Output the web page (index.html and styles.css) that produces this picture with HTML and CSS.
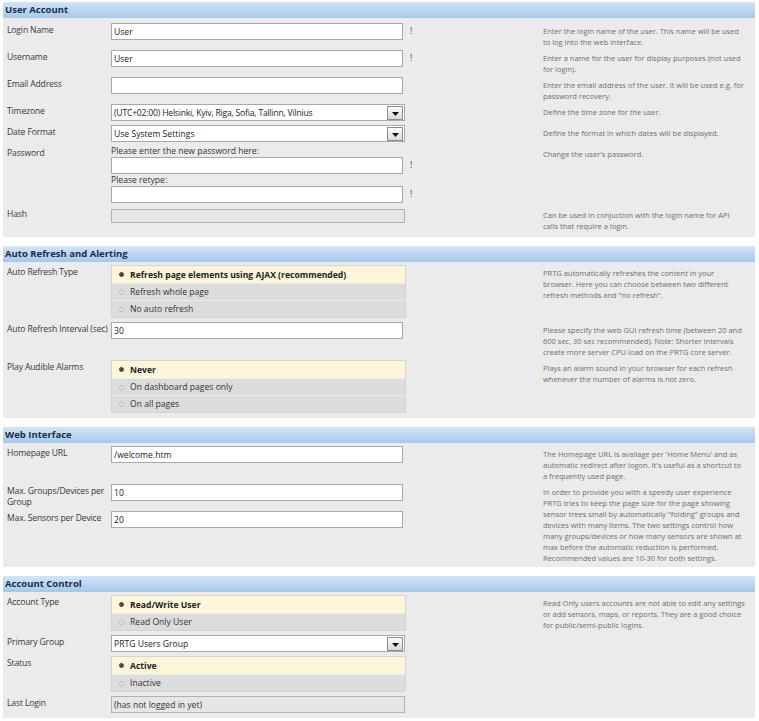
FILE: index.html
```html
<!DOCTYPE html>
<html>
<head>
<meta charset="utf-8">
<link rel="stylesheet" href="styles.css">
</head>
<body>
<div class="page">

  <section class="panel">
    <h2 class="panel-head">User Account</h2>
    <div class="panel-body lead">
      <div class="row">
        <div class="main">
          <div class="line">
            <div class="lbl">Login Name</div>
            <div class="ctrl"><div class="pair"><div class="box"><input class="txt" value="User"></div><span class="mark">!</span></div></div>
          </div>
        </div>
        <p class="help">Enter the login name of the user. This name will be used<br>to log into the web interface.</p>
      </div>
      <div class="row">
        <div class="main">
          <div class="line">
            <div class="lbl">Username</div>
            <div class="ctrl"><div class="pair"><div class="box"><input class="txt" value="User"></div><span class="mark">!</span></div></div>
          </div>
        </div>
        <p class="help">Enter a name for the user for display purposes (not used<br>for login).</p>
      </div>
      <div class="row">
        <div class="main">
          <div class="line">
            <div class="lbl">Email Address</div>
            <div class="ctrl"><div class="pair"><div class="box"><input class="txt" value=""></div></div></div>
          </div>
        </div>
        <p class="help">Enter the email address of the user. It will be used e.g. for<br>password recovery.</p>
      </div>
      <div class="row">
        <div class="main">
          <div class="line">
            <div class="lbl">Timezone</div>
            <div class="ctrl"><div class="pair"><div class="box">
              <div class="sel"><span class="sel-text tight">(UTC+02:00) Helsinki, Kyiv, Riga, Sofia, Tallinn, Vilnius</span><span class="sel-btn"><svg width="7" height="4" viewBox="0 0 7 4"><path d="M0 0H7L3.5 4Z" fill="#111"/></svg></span></div>
            </div></div></div>
          </div>
        </div>
        <p class="help">Define the time zone for the user.</p>
      </div>
      <div class="row">
        <div class="main">
          <div class="line">
            <div class="lbl">Date Format</div>
            <div class="ctrl"><div class="pair"><div class="box">
              <div class="sel"><span class="sel-text">Use System Settings</span><span class="sel-btn"><svg width="7" height="4" viewBox="0 0 7 4"><path d="M0 0H7L3.5 4Z" fill="#111"/></svg></span></div>
            </div></div></div>
          </div>
        </div>
        <p class="help">Define the format in which dates will be displayed.</p>
      </div>
      <div class="row">
        <div class="main">
          <div class="line">
            <div class="lbl">Password</div>
            <div class="ctrl">
              <div class="caption">Please enter the new password here:</div>
              <div class="pair"><div class="box"><input class="txt" type="password" value=""></div><span class="mark">!</span></div>
              <div class="caption next">Please retype:</div>
              <div class="pair"><div class="box"><input class="txt" type="password" value=""></div><span class="mark">!</span></div>
            </div>
          </div>
        </div>
        <p class="help">Change the user's password.</p>
      </div>
      <div class="row">
        <div class="main">
          <div class="line">
            <div class="lbl">Hash</div>
            <div class="ctrl"><div class="pair"><div class="box"><input class="txt ro short" value="" readonly></div></div></div>
          </div>
        </div>
        <p class="help">Can be used in conjuction with the login name for API<br>calls that require a login.</p>
      </div>
    </div>
  </section>

  <section class="panel">
    <h2 class="panel-head">Auto Refresh and Alerting</h2>
    <div class="panel-body">
      <div class="row">
        <div class="main">
          <div class="line">
            <div class="lbl">Auto Refresh Type</div>
            <div class="ctrl">
              <div class="radios">
                <div class="opt on"><span class="dot"></span>Refresh page elements using AJAX (recommended)</div>
                <div class="opt"><span class="dot"></span>Refresh whole page</div>
                <div class="opt"><span class="dot"></span>No auto refresh</div>
              </div>
            </div>
          </div>
        </div>
        <p class="help">PRTG automatically refreshes the content in your<br>browser. Here you can choose between two different<br>refresh methods and "no refresh".</p>
      </div>
      <div class="row">
        <div class="main">
          <div class="line">
            <div class="lbl">Auto Refresh Interval (sec)</div>
            <div class="ctrl"><div class="pair"><div class="box"><input class="txt" value="30"></div></div></div>
          </div>
        </div>
        <p class="help">Please specify the web GUI refresh time (between 20 and<br>600 sec, 30 sec recommended). Note: Shorter intervals<br>create more server CPU load on the PRTG core server.</p>
      </div>
      <div class="row">
        <div class="main">
          <div class="line">
            <div class="lbl">Play Audible Alarms</div>
            <div class="ctrl">
              <div class="radios">
                <div class="opt on"><span class="dot"></span>Never</div>
                <div class="opt"><span class="dot"></span>On dashboard pages only</div>
                <div class="opt"><span class="dot"></span>On all pages</div>
              </div>
            </div>
          </div>
        </div>
        <p class="help">Plays an alarm sound in your browser for each refresh<br>whenever the number of alarms is not zero.</p>
      </div>
    </div>
  </section>

  <section class="panel">
    <h2 class="panel-head">Web Interface</h2>
    <div class="panel-body">
      <div class="row">
        <div class="main">
          <div class="line">
            <div class="lbl">Homepage URL</div>
            <div class="ctrl"><div class="pair"><div class="box"><input class="txt" value="/welcome.htm"></div></div></div>
          </div>
        </div>
        <p class="help">The Homepage URL is availage per 'Home Menu' and as<br>automatic redirect after logon. It's useful as a shortcut to<br>a frequently used page.</p>
      </div>
      <div class="row">
        <div class="main">
          <div class="line">
            <div class="lbl">Max. Groups/Devices per<br>Group</div>
            <div class="ctrl"><div class="pair"><div class="box"><input class="txt" value="10"></div></div></div>
          </div>
          <div class="line">
            <div class="lbl">Max. Sensors per Device</div>
            <div class="ctrl"><div class="pair"><div class="box"><input class="txt" value="20"></div></div></div>
          </div>
        </div>
        <p class="help">In order to provide you with a speedy user experience<br>PRTG tries to keep the page size for the page showing<br>sensor trees small by automatically "folding" groups and<br>devices with many items. The two settings control how<br>many groups/devices or how many sensors are shown at<br>max before the automatic reduction is performed.<br>Recommended values are 10-30 for both settings.</p>
      </div>
    </div>
  </section>

  <section class="panel">
    <h2 class="panel-head">Account Control</h2>
    <div class="panel-body">
      <div class="row">
        <div class="main">
          <div class="line">
            <div class="lbl">Account Type</div>
            <div class="ctrl">
              <div class="radios">
                <div class="opt on"><span class="dot"></span>Read/Write User</div>
                <div class="opt"><span class="dot"></span>Read Only User</div>
              </div>
            </div>
          </div>
        </div>
        <p class="help">Read Only users accounts are not able to edit any settings<br>or add sensors, maps, or reports. They are a good choice<br>for public/semi-public logins.</p>
      </div>
      <div class="row">
        <div class="main">
          <div class="line">
            <div class="lbl">Primary Group</div>
            <div class="ctrl"><div class="pair"><div class="box">
              <div class="sel"><span class="sel-text">PRTG Users Group</span><span class="sel-btn"><svg width="7" height="4" viewBox="0 0 7 4"><path d="M0 0H7L3.5 4Z" fill="#111"/></svg></span></div>
            </div></div></div>
          </div>
        </div>
        <p class="help"></p>
      </div>
      <div class="row">
        <div class="main">
          <div class="line">
            <div class="lbl">Status</div>
            <div class="ctrl">
              <div class="radios">
                <div class="opt on"><span class="dot"></span>Active</div>
                <div class="opt"><span class="dot"></span>Inactive</div>
              </div>
            </div>
          </div>
        </div>
        <p class="help"></p>
      </div>
      <div class="row">
        <div class="main">
          <div class="line">
            <div class="lbl">Last Login</div>
            <div class="ctrl"><div class="pair"><div class="box"><input class="txt ro" value="(has not logged in yet)" readonly></div></div></div>
          </div>
        </div>
        <p class="help"></p>
      </div>
    </div>
  </section>

</div>
</body>
</html>
```

FILE: styles.css
```css
* { box-sizing: border-box; }

body {
  margin: 0;
  background: #ffffff;
  font-family: "Open Sans", "Noto Sans", sans-serif;
  color: #333333;
}

.page {
  padding: 2px 4px 0 3px;
}

.panel {
  background: #ebebeb;
  margin-bottom: 9px;
}

.panel-head {
  margin: 0;
  height: 16px;
  line-height: 16px;
  padding-left: 2px;
  font-size: 9.5px;
  font-weight: 700;
  color: #1b2c46;
  background: linear-gradient(#d3e5f7, #a6c8ea);
}

.panel-body {
  padding: 1px 0 3px 4px;
}

.panel-body.lead {
  padding-top: 3px;
  padding-bottom: 5px;
}

.row {
  display: flex;
}

.main {
  width: 536px;
  flex: none;
}

.line {
  display: flex;
  padding-top: 2px;
}

.lbl {
  width: 104px;
  flex: none;
  padding: 2px 0;
  font-size: 8.6px;
  line-height: 10.5px;
  letter-spacing: -0.15px;
  white-space: nowrap;
  color: #383838;
}

.ctrl {
  padding-bottom: 2px;
}

.pair {
  display: flex;
  align-items: center;
}

.box {
  width: 295px;
  flex: none;
}

.mark {
  margin-left: 4px;
  font-size: 8.6px;
  line-height: 11px;
  color: #3a3a3a;
}

.caption {
  font-size: 8.6px;
  line-height: 11px;
  color: #333333;
}

.caption.next {
  margin-top: 1px;
}

.help {
  flex: 1;
  margin: 0;
  padding: 5px 4px 0 0;
  font-size: 7.5px;
  line-height: 11px;
  color: #6e6e6e;
  white-space: nowrap;
}

.txt {
  display: block;
  width: 292px;
  height: 17px;
  margin: 0;
  border: 1px solid #a9a9a9;
  border-radius: 0;
  background: #ffffff;
  padding: 0 2px;
  font-family: "Open Sans", "Noto Sans", sans-serif;
  font-size: 8.6px;
  color: #222222;
  outline: none;
}

.txt.ro {
  width: 294px;
  background: #e6e6e6;
  border-color: #b2b2b2;
  color: #333333;
}

.txt.short {
  height: 14px;
  margin: 2px 0 1px;
}

.sel {
  display: flex;
  align-items: center;
  width: 294px;
  height: 17px;
  border: 1px solid #a9a9a9;
  background: #ffffff;
  padding-left: 2px;
  font-size: 8.6px;
  color: #222222;
}

.sel-text {
  flex: 1;
  white-space: nowrap;
  overflow: hidden;
}

.sel-text.tight {
  letter-spacing: -0.2px;
}

.sel-btn {
  display: flex;
  align-items: center;
  justify-content: center;
  width: 16px;
  height: 14px;
  margin-right: 1px;
  padding-top: 2px;
  border: 1px solid #8c8c8c;
  background: linear-gradient(#fbfbfb, #dadada);
}

.radios {
  width: 295px;
  border: 1px solid #d4d4d4;
  background: #dcdcdc;
}

.opt {
  display: flex;
  align-items: center;
  height: 17px;
  padding-left: 7px;
  border-top: 1px solid #ebebeb;
  font-size: 8.6px;
  color: #333333;
}

.opt:first-child {
  border-top: none;
}

.opt.on {
  background: #fdf5d9;
  font-weight: 700;
  color: #222222;
}

.dot {
  width: 5px;
  height: 5px;
  margin-right: 6px;
  border-radius: 50%;
  border: 1px solid #b8b8b8;
  background: #e6e6e6;
  flex: none;
}

.opt.on .dot {
  background: #4c4a3d;
  border-color: #4c4a3d;
}
```
